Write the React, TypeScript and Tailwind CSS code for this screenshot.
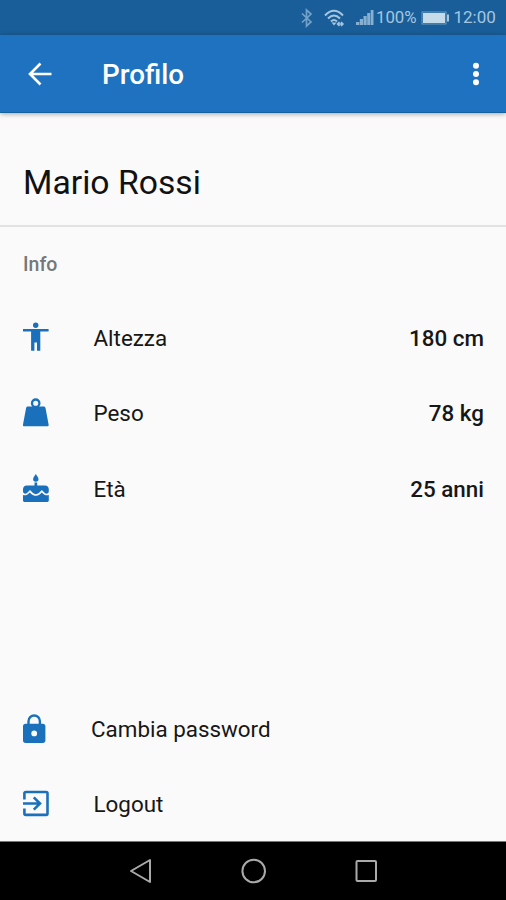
import type { ReactNode } from 'react';

const blue = '#1b70bb';

function PersonIcon() {
  return (
    <svg className="-mt-[2px]" width="26" height="30" viewBox="0 0 26 30" fill={blue}>
      <circle cx="12.700" cy="3.200" r="2.700" />
      <path d="M0 7h25.600v2.500h-8.300v19.200h-3.300V20.500h-2.600v8.200H8.100V9.500H0z" />
    </svg>
  );
}

function WeightIcon() {
  return (
    <svg width="26" height="30" viewBox="0 0 26 30" fill={blue}>
      <circle cx="12.700" cy="5.200" r="3.700" fill="none" stroke={blue} strokeWidth="2.300" />
      <path d="M5 8.600h15.500c1.200 0 1.800.6 2.100 1.800l3 16.200c.2 1.100-.3 1.700-1.400 1.700H1.400C.3 28.300-.2 27.700 0 26.600l3-16.200c.3-1.200.8-1.800 2-1.800z" />
    </svg>
  );
}

function CakeIcon() {
  return (
    <svg width="26" height="30" viewBox="0 0 26 30" fill={blue}>
      <path d="M12.800 0c1.300 2 2.700 3.700 2.700 5.100a2.700 2.700 0 0 1-5.400 0c0-1.500 1.400-3.100 2.700-5.100zM11.500 8.500h2.700v3h7.800c2.200 0 3.800 1.600 3.800 3.800v2c0 1.400-1 2.400-2.300 2.400-.7 0-1.200-.2-1.700-.7l-3-2.900-3 2.900c-1.600 1.500-4.200 1.500-5.800 0l-3-2.900-3 2.900c-.5.500-1.100.7-1.700.7C1 19.700 0 18.700 0 17.300v-2c0-2.200 1.600-3.800 3.800-3.800h7.700zM0 20.900c1.700.7 3.800.4 5.200-1l1.600-1.500 1.500 1.500c2.500 2.400 6.500 2.400 9 0l1.500-1.500 1.600 1.500c1.500 1.400 3.500 1.700 5.400 1v5.700c0 .8-.6 1.300-1.300 1.300H1.300C.6 27.900 0 27.400 0 26.600z" />
    </svg>
  );
}

function LockIcon() {
  return (
    <svg width="26" height="30" viewBox="0 0 26 30" fill={blue}>
      <path d="M5.500 11V7.200a5.700 5.700 0 0 1 11.400 0V11" fill="none" stroke={blue} strokeWidth="2.400" />
      <path fillRule="evenodd" d="M2.500 9.800h17.400c1.500 0 2.500 1 2.500 2.500v14.200c0 1.500-1 2.500-2.500 2.500H2.500C1 29 0 28 0 26.500V12.300c0-1.500 1-2.500 2.500-2.500zm8.700 6.700a2.900 2.900 0 1 0 0 5.800 2.900 2.900 0 0 0 0-5.800z" />
    </svg>
  );
}

function LogoutIcon() {
  return (
    <svg width="26" height="30" viewBox="0 0 26 30" fill="none" stroke={blue} strokeWidth="2.600">
      <path d="M1.400 10.500V4.300c0-.8.500-1.300 1.300-1.300h20.500c.8 0 1.300.5 1.300 1.300v20.300c0 .8-.5 1.300-1.300 1.300H2.700c-.8 0-1.300-.5-1.300-1.300v-5.200M0 14.500h16.500M10.800 8.300L17 14.500l-6.200 6.200" />
    </svg>
  );
}

type RowProps = { icon: ReactNode; label: string; value?: string; labelClass?: string };

function Row({ icon, label, value, labelClass = 'ml-[44.500px]' }: RowProps) {
  return (
    <div className="flex h-[75.500px] items-center pl-[23px] pr-[22px] text-[22.400px] text-[#171717]">
      <span className="w-[26px] shrink-0">{icon}</span>
      <span className={`${labelClass} pt-[2px]`}>{label}</span>
      {value && <span className="ml-auto pt-[2px] font-medium">{value}</span>}
    </div>
  );
}

function StatusBar() {
  return (
    <div className="flex h-[35px] shrink-0 items-center bg-[#195e99] pl-[300px] text-[17px] text-[#a6c6df]">
      <svg className="shrink-0" width="76" height="24" viewBox="300 6 76 24" fill="none">
        <path d="M302 13.500l9 8.500-4.500 4V10l4.500 4-9 8.500" stroke="#73a1c7" strokeWidth="1.700" />
        <g stroke="#a6c6df" strokeWidth="2">
          <path d="M325 15.500q9-9.500 18 0M328 18.500q6-6 12 0M331 21.500q3-3 6 0" />
        </g>
        <path d="M331.500 22.500l2.500 3 2.500-3z" fill="#a6c6df" />
        <path d="M338 24h4.500M339.500 22l-2 2 2 2M341 22l2 2-2 2" stroke="#a6c6df" strokeWidth="1.500" />
        <path d="M356 25v-3h3.300v3zM359.800 25v-6h3.200v6zM363.500 25v-9h3.200v9zM367.200 25v-12h3v12zM370.700 25V10h2.800v15z" fill="#86afd0" />
      </svg>
      <span className="w-[44.500px] whitespace-nowrap pt-[1px] text-[16.800px]">100%</span>
      <svg className="shrink-0" width="29" height="16" viewBox="0 0 29 16" fill="none">
        <rect x="1" y="2" width="24" height="12" stroke="#6f9cc0" />
        <path d="M2 3h22v10H2z" fill="#c5dbea" />
        <path d="M26 4.500h2v7h-2z" fill="#a6c6df" />
      </svg>
      <span className="ml-[4px] pt-[1px]">12:00</span>
    </div>
  );
}

export default function App() {
  return (
    <div className="flex h-[900px] w-[506px] flex-col overflow-hidden bg-[#fafafa] font-['Roboto',sans-serif]">
      <StatusBar />
      <header className="flex h-[78px] shrink-0 items-center border-b border-[#15619f] bg-[#1e72bf] pl-[28px] pr-[26px] text-white shadow-[0_1px_5px_rgba(0,0,0,0.35)]">
        <svg width="24" height="24" viewBox="0 0 24 24" fill="none" stroke="currentColor" strokeWidth="2.600">
          <path d="M23.500 12H2.500M12.500 1.500L2 12l10.500 10.500" />
        </svg>
        <h1 className="ml-[50px] pt-[2px] text-[27.800px] font-medium">Profilo</h1>
        <svg className="ml-auto" width="8" height="24" viewBox="0 0 8 24" fill="currentColor">
          <circle cx="4" cy="3.700" r="3" />
          <circle cx="4" cy="12" r="3" />
          <circle cx="4" cy="20.300" r="3" />
        </svg>
      </header>
      <main className="flex flex-1 flex-col">
        <section className="flex h-[114px] items-center border-b-2 border-[#e2e2e2] pl-[23px] pt-[28px] text-[33.700px] text-[#111]">
          Mario Rossi
        </section>
        <h2 className="flex h-[73px] items-center pl-[23px] pt-[2px] text-[19.500px] font-medium text-[#777]">Info</h2>
        <Row icon={<PersonIcon />} label="Altezza" value="180 cm" />
        <Row icon={<WeightIcon />} label="Peso" value="78 kg" />
        <Row icon={<CakeIcon />} label="Età" value="25 anni" />
        <div className="-mb-[1px] mt-auto">
          <Row icon={<LockIcon />} label="Cambia password" labelClass="ml-[42px]" />
          <Row icon={<LogoutIcon />} label="Logout" />
        </div>
      </main>
      <nav className="flex h-[59px] shrink-0 items-center justify-between border-t border-[#777] bg-black pl-[129px] pr-[129px]">
        <svg width="24" height="26" viewBox="0 0 24 26" fill="none" stroke="#aaa" strokeWidth="2" strokeLinejoin="round">
          <path d="M21 2v22L2 13z" />
        </svg>
        <svg width="26" height="26" viewBox="0 0 26 26" fill="none" stroke="#aaa" strokeWidth="2">
          <circle cx="12.700" cy="13" r="11.300" />
        </svg>
        <svg width="22" height="24" viewBox="0 0 22 24" fill="none" stroke="#aaa" strokeWidth="2">
          <rect x="1.500" y="2" width="19.500" height="20" rx="1" />
        </svg>
      </nav>
    </div>
  );
}
